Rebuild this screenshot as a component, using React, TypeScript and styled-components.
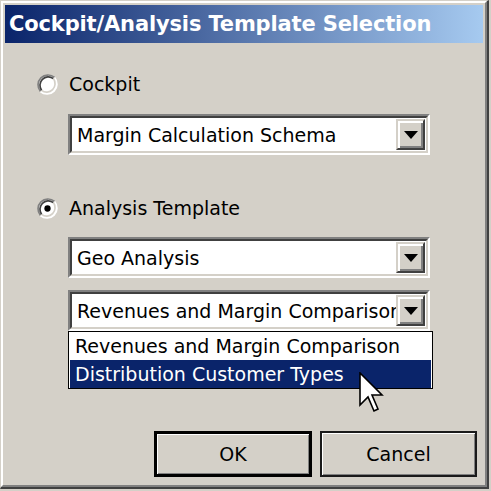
import React from "react";
import styled, { createGlobalStyle } from "styled-components";

const Global = createGlobalStyle`
  html, body { margin: 0; padding: 0; background: #d4d0c8; }
  body { font-family: "DejaVu Sans", Verdana, sans-serif; }
`;

const Window = styled.div`
  width: 489px;
  height: 489px;
  box-sizing: border-box;
  border-style: solid;
  border-width: 1px 2px 2px 1px;
  border-color: #d4d0c8 #404040 #404040 #d4d0c8;
  background: #d4d0c8;
`;

const Frame = styled.div`
  height: 100%;
  box-sizing: border-box;
  border-style: solid;
  border-width: 2px;
  border-color: #ffffff #808080 #808080 #ffffff;
  padding: 2px;
  display: flex;
  flex-direction: column;
`;

const TitleBar = styled.div`
  height: 38px;
  flex: none;
  display: flex;
  align-items: center;
  padding-left: 4px;
  background: linear-gradient(to right, #0a246a 0%, #a6caf0 100%);
  color: #ffffff;
  font-weight: bold;
  font-size: 21px;
  letter-spacing: -0.15px;
  white-space: nowrap;
`;

const Body = styled.div`
  flex: 1;
  display: flex;
  flex-direction: column;
  padding: 26px 6px 0 32px;
  font-size: 19px;
  color: #000;
`;

const RadioRow = styled.label<{ $mt?: number }>`
  display: flex;
  align-items: center;
  gap: 11px;
  height: 30px;
  margin-top: ${(p) => p.$mt ?? 0}px;
`;

const Indent = styled.div<{ $mt: number }>`
  margin-left: 31px;
  margin-top: ${(p) => p.$mt}px;
  position: relative;
  width: 362px;
`;

const ComboBox = styled.div`
  height: 41px;
  box-sizing: border-box;
  border-style: solid;
  border-width: 2px;
  border-color: #808080 #ffffff #ffffff #808080;
  background: #ffffff;
`;

const ComboInner = styled.div`
  height: 100%;
  box-sizing: border-box;
  border-style: solid;
  border-width: 2px;
  border-color: #404040 #d4d0c8 #d4d0c8 #404040;
  display: flex;
  align-items: stretch;
  padding: 1px;
`;

const ComboText = styled.div`
  flex: 1;
  min-width: 0;
  overflow: hidden;
  white-space: nowrap;
  display: flex;
  align-items: center;
  padding-left: 4px;
`;

const DropButton = styled.div`
  width: 29px;
  flex: none;
  box-sizing: border-box;
  background: #d4d0c8;
  border-style: solid;
  border-width: 2px;
  border-color: #d4d0c8 #404040 #404040 #d4d0c8;
  box-shadow: inset 2px 2px #ffffff, inset -2px -2px #808080;
  display: flex;
  align-items: center;
  justify-content: center;
`;

const List = styled.div`
  position: absolute;
  left: 0;
  top: 100%;
  width: 365px;
  box-sizing: border-box;
  border: 1px solid #000;
  background: #fff;
  padding: 0 1px;
  z-index: 2;
`;

const ListItem = styled.div<{ $selected?: boolean }>`
  height: 28px;
  display: flex;
  align-items: center;
  padding-left: 5px;
  white-space: nowrap;
  background: ${(p) => (p.$selected ? "#0a246a" : "#fff")};
  color: ${(p) => (p.$selected ? "#fff" : "#000")};
`;

const Cursor = styled.svg`
  position: absolute;
  left: 290px;
  top: 40px;
  z-index: 3;
`;

const ButtonRow = styled.div`
  margin-top: 100px;
  display: flex;
  justify-content: flex-end;
  gap: 8px;
`;

const Button = styled.div<{ $default?: boolean }>`
  width: ${(p) => (p.$default ? 158 : 157)}px;
  height: 46px;
  box-sizing: border-box;
  display: flex;
  align-items: center;
  justify-content: center;
  background: #d4d0c8;
  border: ${(p) => (p.$default ? "3px solid #000" : "2px solid #1a1a1a")};
  box-shadow: inset 1px 1px #ffffff, inset -1px -1px #808080;
  font-size: 19px;
`;

const Radio = ({ checked }: { checked?: boolean }) => (
  <svg width="21" height="21" viewBox="0 0 20 20">
    <circle cx="10" cy="10" r="9" fill="#ffffff" />
    <path d="M3.3 16.7 A9.5 9.5 0 0 1 16.7 3.3" stroke="#808080" strokeWidth="1.6" fill="none" />
    <path d="M16.7 3.3 A9.5 9.5 0 0 1 3.3 16.7" stroke="#ffffff" strokeWidth="1.6" fill="none" />
    <path d="M4.4 15.6 A8 8 0 0 1 15.6 4.4" stroke="#404040" strokeWidth="1.6" fill="none" />
    <path d="M15.6 4.4 A8 8 0 0 1 4.4 15.6" stroke="#d4d0c8" strokeWidth="1.6" fill="none" />
    {checked && <circle cx="10" cy="10" r="3" fill="#000" />}
  </svg>
);

const Arrow = () => (
  <svg width="14" height="8" viewBox="0 0 14 8">
    <polygon points="0,0 14,0 7,8" fill="#000" />
  </svg>
);

const Combo = ({ value }: { value: string }) => (
  <ComboBox>
    <ComboInner>
      <ComboText>{value}</ComboText>
      <DropButton>
        <Arrow />
      </DropButton>
    </ComboInner>
  </ComboBox>
);

export default function App() {
  return (
    <>
      <Global />
      <Window>
        <Frame>
          <TitleBar>Cockpit/Analysis Template Selection</TitleBar>
          <Body>
            <RadioRow>
              <Radio />
              <span>Cockpit</span>
            </RadioRow>
            <Indent $mt={15}>
              <Combo value="Margin Calculation Schema" />
            </Indent>
            <RadioRow $mt={38}>
              <Radio checked />
              <span>Analysis Template</span>
            </RadioRow>
            <Indent $mt={14}>
              <Combo value="Geo Analysis" />
            </Indent>
            <Indent $mt={12}>
              <Combo value="Revenues and Margin Comparison" />
              <List>
                <ListItem>Revenues and Margin Comparison</ListItem>
                <ListItem $selected>Distribution Customer Types</ListItem>
                <Cursor width="26" height="42" viewBox="-0.5 -0.5 13 21">
                  <polygon
                    points="0,0 0,16 4,12 7,19 9,18 6,11 11,11"
                    fill="#fff"
                    stroke="#000"
                    strokeWidth="0.8"
                    strokeLinejoin="miter"
                  />
                </Cursor>
              </List>
            </Indent>
            <ButtonRow>
              <Button $default>OK</Button>
              <Button>Cancel</Button>
            </ButtonRow>
          </Body>
        </Frame>
      </Window>
    </>
  );
}
